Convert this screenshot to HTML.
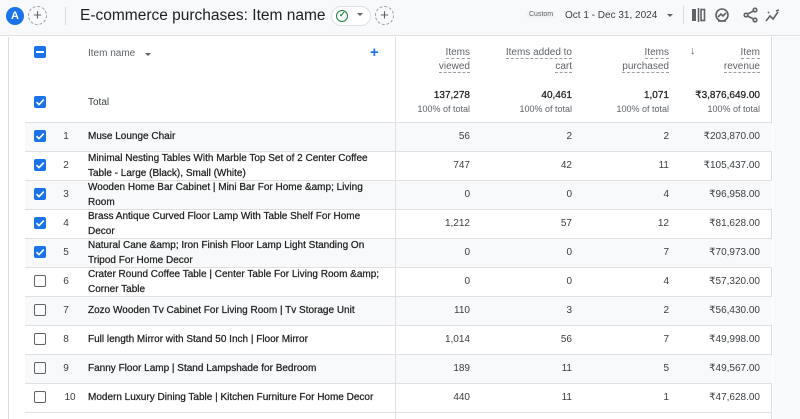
<!DOCTYPE html>
<html><head><meta charset="utf-8"><style>
*{margin:0;padding:0;box-sizing:border-box}
body{width:800px;height:419px;overflow:hidden;background:#fff;font-family:"Liberation Sans",Arial,sans-serif;color:#202124;position:relative}
.hdr{position:absolute;left:0;top:0;width:800px;height:36px;background:#f8f9fa;border-bottom:1px solid #e0e0e0}
.a{position:absolute}
.card{position:absolute;left:8px;top:37px;width:764px;height:382px;border-left:1px solid #dadce0;border-right:1px solid #dadce0;background:#fff}
.rstrip{position:absolute;left:773px;top:37px;width:27px;height:382px;background:#f8f9fa}
.cb{position:absolute;width:12px;height:12px;border-radius:2px;background:#1a73e8}
.cb svg{position:absolute;left:0;top:0}
.cbe{position:absolute;width:12px;height:12px;border-radius:2px;border:1.5px solid #5f6368;background:#fff}
.row{position:absolute;left:25px;width:747px;height:29px;border-top:1px solid #e0e0e0}
.g{background:#f8f9fa}
.num{position:absolute;left:60px;width:12px;text-align:center;font-size:10px;color:#3c4043}
.nm{position:absolute;left:88px;width:300px;font-size:10px;line-height:15px;color:#1f1f1f;-webkit-text-stroke:0.25px #1f1f1f}
.v{position:absolute;text-align:right;font-size:10px;color:#3c4043}
.hd{position:absolute;text-align:right;font-size:10px;line-height:14px;color:#5f6368}
.hd span{border-bottom:1px dashed #9aa0a6}
.vline{position:absolute;left:395px;top:37px;width:1px;height:382px;background:#e0e0e0}
</style></head><body>
<div class="hdr"></div>
<div class="a" style="left:6px;top:7px;width:18px;height:18px;border-radius:50%;background:#1a73e8;color:#fff;font-size:11px;font-weight:bold;text-align:center;line-height:18px">A</div>
<div class="a" style="left:28px;top:6px;width:19px;height:19px;border-radius:50%;border:1px dashed #9aa0a6;color:#5f6368;font-size:15px;text-align:center;line-height:17px">+</div>
<div class="a" style="left:65px;top:7px;width:1px;height:18px;background:#dadce0"></div>
<div class="a" style="left:80px;top:7px;font-size:15.5px;color:#202124;white-space:nowrap">E-commerce purchases: Item name</div>
<div class="a" style="left:331px;top:6px;width:40px;height:20px;border-radius:10px;border:1px solid #e0e0e0;background:#fff"></div>
<div class="a" style="left:336px;top:10px;width:12px;height:12px;border-radius:50%;border:1.5px solid #188038"></div>
<div class="a" style="left:339px;top:10px;font-size:8px;color:#188038;font-weight:bold">✓</div>
<div class="a" style="left:357px;top:13px;border:3px solid transparent;border-top:3px solid #5f6368"></div>
<div class="a" style="left:375px;top:6px;width:19px;height:19px;border-radius:50%;border:1px dashed #9aa0a6;color:#5f6368;font-size:15px;text-align:center;line-height:17px">+</div>
<div class="a" style="left:527px;top:11px;font-size:7px;color:#5f6368;background:#f1f3f4;padding:0 2px">Custom</div>
<div class="a" style="left:565px;top:10px;font-size:10px;color:#3c4043;white-space:nowrap">Oct 1 - Dec 31, 2024</div>
<div class="a" style="left:667px;top:14px;border:3px solid transparent;border-top:3px solid #5f6368"></div>
<div class="a" style="left:683px;top:6px;width:1px;height:18px;background:#dadce0"></div>
<svg class="a" style="left:690px;top:7px" width="110" height="18" viewBox="0 0 110 18" fill="none" stroke="#5f6368" stroke-width="1.6">
<rect x="2" y="2" width="4" height="12" fill="#5f6368" stroke="none"/><line x1="8.5" y1="1" x2="8.5" y2="15"/><rect x="11" y="2.5" width="3.5" height="11"/>
<circle cx="32" cy="8" r="6"/><path d="M28 10 L31 7 L33 9 L36 6"/><path d="M28 14 L36 14"/>
<circle cx="65" cy="3" r="1.8"/><circle cx="56" cy="8" r="1.8"/><circle cx="65" cy="13" r="1.8"/><path d="M63.5 4 L57.5 7 M57.5 9 L63.5 12"/>
<path d="M76 14 L80 9 L83 12 L88 5" /><path d="M86 4 L89 3 M78 6 L79 5"/>
</svg>
<div class="card"></div>
<div class="rstrip"></div>
<!-- header -->
<div class="cb" style="left:34px;top:46px"><div style="position:absolute;left:2px;top:5px;width:8px;height:2px;background:#fff"></div></div>
<div class="a" style="left:88px;top:48px;font-size:10px;color:#5f6368">Item name</div>
<div class="a" style="left:145px;top:53px;border:3px solid transparent;border-top:3px solid #5f6368"></div>
<div class="a" style="left:370px;top:44px;font-size:15px;color:#1a73e8;font-weight:bold">+</div>
<div class="hd" style="left:400px;width:70px;top:46px"><span>Items</span><br><span>viewed</span></div>
<div class="hd" style="left:480px;width:92px;top:46px"><span>Items added to</span><br><span>cart</span></div>
<div class="hd" style="left:590px;width:79px;top:46px"><span>Items</span><br><span>purchased</span></div>
<div class="a" style="left:690px;top:45px;font-size:11px;color:#5f6368">↓</div>
<div class="hd" style="left:700px;width:60px;top:46px"><span>Item</span><br><span>revenue</span></div>
<div class="cb" style="left:34px;top:96px"><svg width="12" height="12"><path d="M2.5 6.2 L5 8.6 L9.8 3.6" stroke="#fff" stroke-width="1.6" fill="none"/></svg></div>
<div class="a" style="left:88px;top:97px;font-size:10px;color:#3c4043">Total</div>
<div class="v" style="left:400px;width:70px;top:90px;color:#202124;-webkit-text-stroke:0.25px #202124">137,278</div>
<div class="v" style="left:480px;width:92px;top:90px;color:#202124;-webkit-text-stroke:0.25px #202124">40,461</div>
<div class="v" style="left:590px;width:79px;top:90px;color:#202124;-webkit-text-stroke:0.25px #202124">1,071</div>
<div class="v" style="left:680px;width:80px;top:90px;color:#202124;-webkit-text-stroke:0.25px #202124">₹3,876,649.00</div>
<div class="v" style="left:400px;width:70px;top:104px;color:#5f6368;font-size:9px">100% of total</div>
<div class="v" style="left:480px;width:92px;top:104px;color:#5f6368;font-size:9px">100% of total</div>
<div class="v" style="left:590px;width:79px;top:104px;color:#5f6368;font-size:9px">100% of total</div>
<div class="v" style="left:680px;width:80px;top:104px;color:#5f6368;font-size:9px">100% of total</div>

<div class="row g" style="top:122px"></div>
<div class="row" style="top:151px"></div>
<div class="row g" style="top:180px"></div>
<div class="row" style="top:209px"></div>
<div class="row g" style="top:238px"></div>
<div class="row" style="top:267px"></div>
<div class="row g" style="top:296px"></div>
<div class="row" style="top:325px"></div>
<div class="row g" style="top:354px"></div>
<div class="row" style="top:383px"></div>
<div class="row" style="top:412px;height:7px"></div>
<div class="vline"></div>

<div class="cb" style="left:34px;top:130px"><svg width="12" height="12"><path d="M2.5 6.2 L5 8.6 L9.8 3.6" stroke="#fff" stroke-width="1.6" fill="none"/></svg></div>
<div class="num" style="top:131px">1</div><div class="nm" style="top:129px">Muse Lounge Chair</div>
<div class="v" style="left:400px;width:70px;top:131px">56</div><div class="v" style="left:480px;width:92px;top:131px">2</div><div class="v" style="left:590px;width:79px;top:131px">2</div><div class="v" style="left:680px;width:80px;top:131px">₹203,870.00</div>

<div class="cb" style="left:34px;top:159px"><svg width="12" height="12"><path d="M2.5 6.2 L5 8.6 L9.8 3.6" stroke="#fff" stroke-width="1.6" fill="none"/></svg></div>
<div class="num" style="top:160px">2</div><div class="nm" style="top:151px">Minimal Nesting Tables With Marble Top Set of 2 Center Coffee Table - Large (Black), Small (White)</div>
<div class="v" style="left:400px;width:70px;top:160px">747</div><div class="v" style="left:480px;width:92px;top:160px">42</div><div class="v" style="left:590px;width:79px;top:160px">11</div><div class="v" style="left:680px;width:80px;top:160px">₹105,437.00</div>

<div class="cb" style="left:34px;top:188px"><svg width="12" height="12"><path d="M2.5 6.2 L5 8.6 L9.8 3.6" stroke="#fff" stroke-width="1.6" fill="none"/></svg></div>
<div class="num" style="top:189px">3</div><div class="nm" style="top:180px">Wooden Home Bar Cabinet | Mini Bar For Home &amp;amp; Living Room</div>
<div class="v" style="left:400px;width:70px;top:189px">0</div><div class="v" style="left:480px;width:92px;top:189px">0</div><div class="v" style="left:590px;width:79px;top:189px">4</div><div class="v" style="left:680px;width:80px;top:189px">₹96,958.00</div>

<div class="cb" style="left:34px;top:217px"><svg width="12" height="12"><path d="M2.5 6.2 L5 8.6 L9.8 3.6" stroke="#fff" stroke-width="1.6" fill="none"/></svg></div>
<div class="num" style="top:218px">4</div><div class="nm" style="top:209px">Brass Antique Curved Floor Lamp With Table Shelf For Home Decor</div>
<div class="v" style="left:400px;width:70px;top:218px">1,212</div><div class="v" style="left:480px;width:92px;top:218px">57</div><div class="v" style="left:590px;width:79px;top:218px">12</div><div class="v" style="left:680px;width:80px;top:218px">₹81,628.00</div>

<div class="cb" style="left:34px;top:246px"><svg width="12" height="12"><path d="M2.5 6.2 L5 8.6 L9.8 3.6" stroke="#fff" stroke-width="1.6" fill="none"/></svg></div>
<div class="num" style="top:247px">5</div><div class="nm" style="top:238px">Natural Cane &amp;amp; Iron Finish Floor Lamp Light Standing On Tripod For Home Decor</div>
<div class="v" style="left:400px;width:70px;top:247px">0</div><div class="v" style="left:480px;width:92px;top:247px">0</div><div class="v" style="left:590px;width:79px;top:247px">7</div><div class="v" style="left:680px;width:80px;top:247px">₹70,973.00</div>

<div class="cbe" style="left:34px;top:275px"></div>
<div class="num" style="top:276px">6</div><div class="nm" style="top:267px">Crater Round Coffee Table | Center Table For Living Room &amp;amp; Corner Table</div>
<div class="v" style="left:400px;width:70px;top:276px">0</div><div class="v" style="left:480px;width:92px;top:276px">0</div><div class="v" style="left:590px;width:79px;top:276px">4</div><div class="v" style="left:680px;width:80px;top:276px">₹57,320.00</div>

<div class="cbe" style="left:34px;top:304px"></div>
<div class="num" style="top:305px">7</div><div class="nm" style="top:303px">Zozo Wooden Tv Cabinet For Living Room | Tv Storage Unit</div>
<div class="v" style="left:400px;width:70px;top:305px">110</div><div class="v" style="left:480px;width:92px;top:305px">3</div><div class="v" style="left:590px;width:79px;top:305px">2</div><div class="v" style="left:680px;width:80px;top:305px">₹56,430.00</div>

<div class="cbe" style="left:34px;top:333px"></div>
<div class="num" style="top:334px">8</div><div class="nm" style="top:332px">Full length Mirror with Stand 50 Inch | Floor Mirror</div>
<div class="v" style="left:400px;width:70px;top:334px">1,014</div><div class="v" style="left:480px;width:92px;top:334px">56</div><div class="v" style="left:590px;width:79px;top:334px">7</div><div class="v" style="left:680px;width:80px;top:334px">₹49,998.00</div>

<div class="cbe" style="left:34px;top:362px"></div>
<div class="num" style="top:363px">9</div><div class="nm" style="top:361px">Fanny Floor Lamp | Stand Lampshade for Bedroom</div>
<div class="v" style="left:400px;width:70px;top:363px">189</div><div class="v" style="left:480px;width:92px;top:363px">11</div><div class="v" style="left:590px;width:79px;top:363px">5</div><div class="v" style="left:680px;width:80px;top:363px">₹49,567.00</div>

<div class="cbe" style="left:34px;top:391px"></div>
<div class="num" style="top:392px;left:62px;width:16px">10</div><div class="nm" style="top:390px">Modern Luxury Dining Table | Kitchen Furniture For Home Decor</div>
<div class="v" style="left:400px;width:70px;top:392px">440</div><div class="v" style="left:480px;width:92px;top:392px">11</div><div class="v" style="left:590px;width:79px;top:392px">1</div><div class="v" style="left:680px;width:80px;top:392px">₹47,628.00</div>
</body></html>
